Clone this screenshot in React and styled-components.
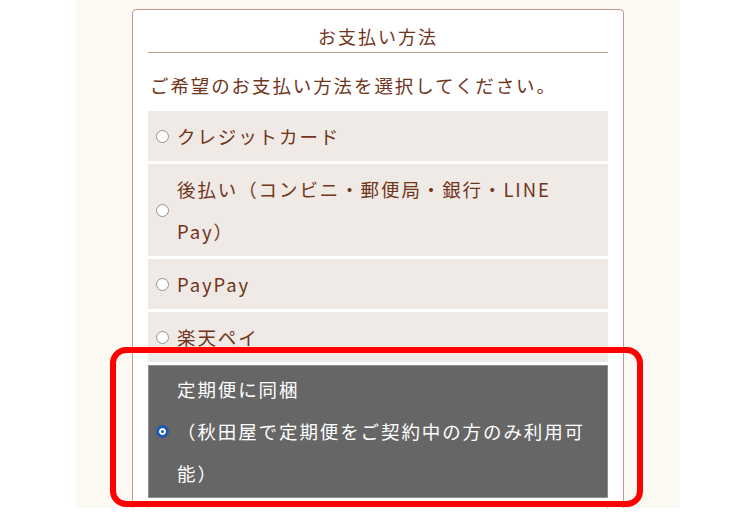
import styled, { createGlobalStyle, css } from 'styled-components'

const GlobalStyle = createGlobalStyle`
    html, body {
        margin: 0;
        padding: 0;
        background: #ffffff;
    }
    body {
        font-family: "Noto Sans CJK JP", "Noto Sans", sans-serif;
    }
`

const options = [
    { id: 'credit', label: 'クレジットカード' },
    { id: 'later', label: '後払い（コンビニ・郵便局・銀行・LINE Pay）' },
    { id: 'paypay', label: 'PayPay' },
    { id: 'rakuten', label: '楽天ペイ' },
    { id: 'teiki', label: ['定期便に同梱', '（秋田屋で定期便をご契約中の方のみ利用可能）'], checked: true },
    { id: 'other', label: '', plain: true },
]

const PaymentMethod = () => {
    return (
        <Stage>
            <Card>
                <Title>お支払い方法</Title>
                <Lead>ご希望のお支払い方法を選択してください。</Lead>
                <OptionList>
                    {options.map((opt) => (
                        <Option key={opt.id} $checked={opt.checked} $plain={opt.plain}>
                            <Radio type="radio" name="payment" defaultChecked={opt.checked} />
                            <OptionText>
                                {Array.isArray(opt.label)
                                    ? opt.label.map((line, i) => <span key={i}>{i > 0 && <br />}{line}</span>)
                                    : opt.label}
                            </OptionText>
                        </Option>
                    ))}
                </OptionList>
            </Card>
            {/* annotation frame drawn over the screenshot */}
            <Highlight />
        </Stage>
    )
}

export default function App() {
    return (
        <>
            <GlobalStyle />
            <PaymentMethod />
        </>
    )
}

const Stage = styled.div`
    position: relative;
    width: 604px;
    height: 508px;
    margin-left: 76px;
    background: #fcf9f2;
    overflow: hidden;
`

const Card = styled.div`
    width: 460px;
    margin: 9px auto 0;
    padding: 0 15px 20px;
    background: #ffffff;
    border: 1px solid #c19a8d;
    border-radius: 4px;
    color: #71351b;
`

const Title = styled.h2`
    margin: 0;
    padding: 12px 0 2px;
    font-size: 18px;
    font-weight: 400;
    line-height: 28px;
    letter-spacing: 2px;
    text-align: center;
    border-bottom: 1px solid #c19a8d;
`

const Lead = styled.p`
    margin: 18px 0 12px 2px;
    font-size: 18.5px;
    line-height: 28px;
    letter-spacing: 1.9px;
`

const OptionList = styled.div`
    display: flex;
    flex-direction: column;
    gap: 3px;
`

const Option = styled.label`
    display: flex;
    align-items: center;
    padding: 4px 8px 4px 9px;
    background: #efeae5;
    font-size: 18.5px;
    line-height: 42px;
    letter-spacing: 1.9px;

    ${(p) => p.$checked && css`
        padding-top: 3px;
        background: #666666;
        color: #ffffff;
        box-shadow: inset 0 0 0 1px #8e8e8e;
    `}

    ${(p) => p.$plain && css`
        background: #ffffff;
        box-shadow: inset 0 0 0 1px #b4b4b4;
        min-height: 42px;
    `}
`

const Radio = styled.input`
    appearance: none;
    flex: none;
    box-sizing: border-box;
    width: 13px;
    height: 13px;
    margin: 0 8px 0 -1px;
    border: 1.5px solid #949494;
    border-radius: 50%;
    background: #ffffff;

    &:checked {
        border: 3px solid #1d5bb0;
        background: #1d5bb0;
        box-shadow: inset 0 0 0 2px #ffffff;
    }
`

const OptionText = styled.span`
    flex: 1;
`

const Highlight = styled.div`
    position: absolute;
    left: 34px;
    top: 347px;
    width: 533px;
    height: 160px;
    box-sizing: border-box;
    border: 6px solid #ff0000;
    border-radius: 16px;
    pointer-events: none;
`
